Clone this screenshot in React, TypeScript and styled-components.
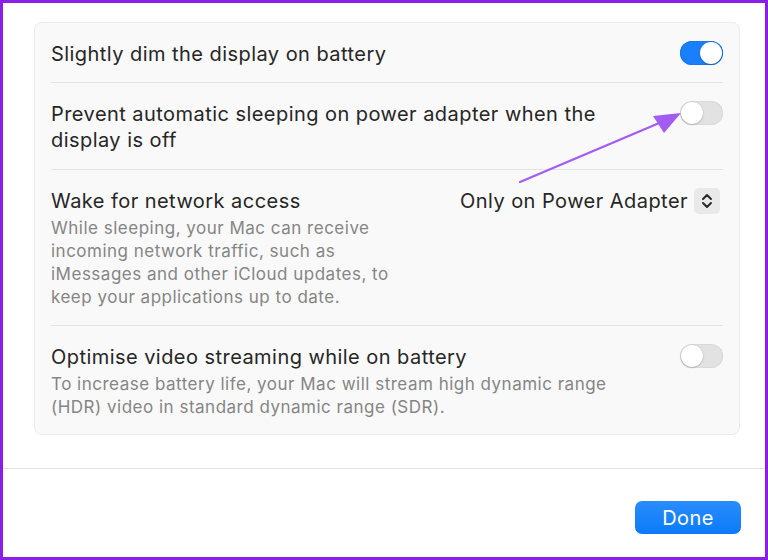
import React from 'react';
import styled, { createGlobalStyle } from 'styled-components';

const GlobalStyle = createGlobalStyle`
	html, body {
		margin: 0;
		background: #ffffff;
	}
	* {
		box-sizing: border-box;
	}
`;

const FONT_STACK = `Inter, "Noto Sans", "Liberation Sans", sans-serif`;
const ROW_INSET = 16;

const Frame = styled.div`
	position: relative;
	width: 768px;
	height: 560px;
	border: 3px solid #8b1fe6;
	background: #ffffff;
	display: flex;
	flex-direction: column;
	font-family: ${FONT_STACK};
	color: #262626;
`;

const Content = styled.div`
	padding: 19px 25px 33px 31px;
`;

const Card = styled.div`
	background: #f9f9f9;
	border: 1px solid #ebebeb;
	border-radius: 8px;
	padding: 0 ${ROW_INSET}px;
`;

const Row = styled.div<{ $pad: string }>`
	display: flex;
	align-items: flex-start;
	justify-content: space-between;
	gap: 20px;
	padding: ${props => props.$pad};
	& + & {
		border-top: 1px solid #e4e4e4;
	}
`;

const TextBlock = styled.div`
	display: flex;
	flex-direction: column;
	gap: 3px;
	min-width: 0;
`;

const Title = styled.div`
	font-size: 20px;
	line-height: 26px;
	letter-spacing: 0.45px;
	color: #262626;
`;

const Description = styled.div`
	font-size: 17px;
	line-height: 23px;
	letter-spacing: 0.5px;
	color: #858585;
`;

const Toggle = styled.div<{ $on?: boolean }>`
	flex: none;
	position: relative;
	width: 43px;
	height: 24px;
	border-radius: 12px;
	background: ${props => (props.$on ? '#1a7ffa' : '#e2e2e2')};
	box-shadow: inset 0 0 0 1px ${props => (props.$on ? '#1777ee' : '#d9d9d9')};

	&::after {
		content: '';
		position: absolute;
		top: 1px;
		left: ${props => (props.$on ? '20px' : '1px')};
		width: 22px;
		height: 22px;
		border-radius: 50%;
		background: #ffffff;
		box-shadow: 0 0.5px 1.5px rgba(0, 0, 0, 0.35);
	}
`;

const Popup = styled.div`
	flex: none;
	display: flex;
	align-items: center;
	gap: 6px;
	margin: 0 3px 0 0;
	font-size: 20px;
	line-height: 26px;
	letter-spacing: 0.45px;
	color: #262626;
`;

const StepperButton = styled.div`
	width: 26px;
	height: 26px;
	border-radius: 5px;
	background: #e9e9e9;
	display: flex;
	align-items: center;
	justify-content: center;
`;

const Footer = styled.div`
	flex: 1;
	border-top: 1px solid #e3e3e3;
	display: flex;
	justify-content: flex-end;
	align-items: flex-start;
	padding: 32px 24px 0 0;
`;

const DoneButton = styled.button`
	width: 106px;
	height: 33px;
	border: none;
	border-radius: 7px;
	background: linear-gradient(#2a8cfc, #0b7bf9);
	color: #ffffff;
	font-family: ${FONT_STACK};
	font-size: 20px;
	letter-spacing: 0.4px;
	padding: 0;
	cursor: pointer;
`;

// annotation arrow laid over the dialog
const Annotation = styled.svg`
	position: absolute;
	left: -3px;
	top: -3px;
	pointer-events: none;
`;

const Chevrons = () => (
	<svg width="12" height="18" viewBox="0 0 12 18">
		<path
			d="M2 7 L6 3 L10 7 M2 11 L6 15 L10 11"
			fill="none"
			stroke="#262626"
			strokeWidth="1.9"
			strokeLinecap="round"
			strokeLinejoin="round"
		/>
	</svg>
);

export default function App() {
	return (
		<>
			<GlobalStyle />
			<Frame>
				<Content>
					<Card>
						<Row $pad="18px 0 15px">
							<Title>Slightly dim the display on battery</Title>
							<Toggle $on />
						</Row>
						<Row $pad="18px 0 16px">
							<Title>
								Prevent automatic sleeping on power adapter when the
								<br />
								display is off
							</Title>
							<Toggle />
						</Row>
						<Row $pad="18px 0 16px">
							<TextBlock>
								<Title>Wake for network access</Title>
								<Description>
									While sleeping, your Mac can receive
									<br />
									incoming network traffic, such as
									<br />
									iMessages and other iCloud updates, to
									<br />
									keep your applications up to date.
								</Description>
							</TextBlock>
							<Popup>
								Only on Power Adapter
								<StepperButton>
									<Chevrons />
								</StepperButton>
							</Popup>
						</Row>
						<Row $pad="18px 0 15px">
							<TextBlock>
								<Title>Optimise video streaming while on battery</Title>
								<Description>
									To increase battery life, your Mac will stream high dynamic range
									<br />
									(HDR) video in standard dynamic range (SDR).
								</Description>
							</TextBlock>
							<Toggle />
						</Row>
					</Card>
				</Content>
				<Footer>
					<DoneButton>Done</DoneButton>
				</Footer>
				<Annotation width="768" height="560" viewBox="0 0 768 560">
					<line
						x1="520"
						y1="182"
						x2="664"
						y2="121"
						stroke="#a35cf2"
						strokeWidth="2.2"
						strokeLinecap="round"
					/>
					<polygon points="681,113 653,116 664,133" fill="#a35cf2" />
				</Annotation>
			</Frame>
		</>
	);
}
